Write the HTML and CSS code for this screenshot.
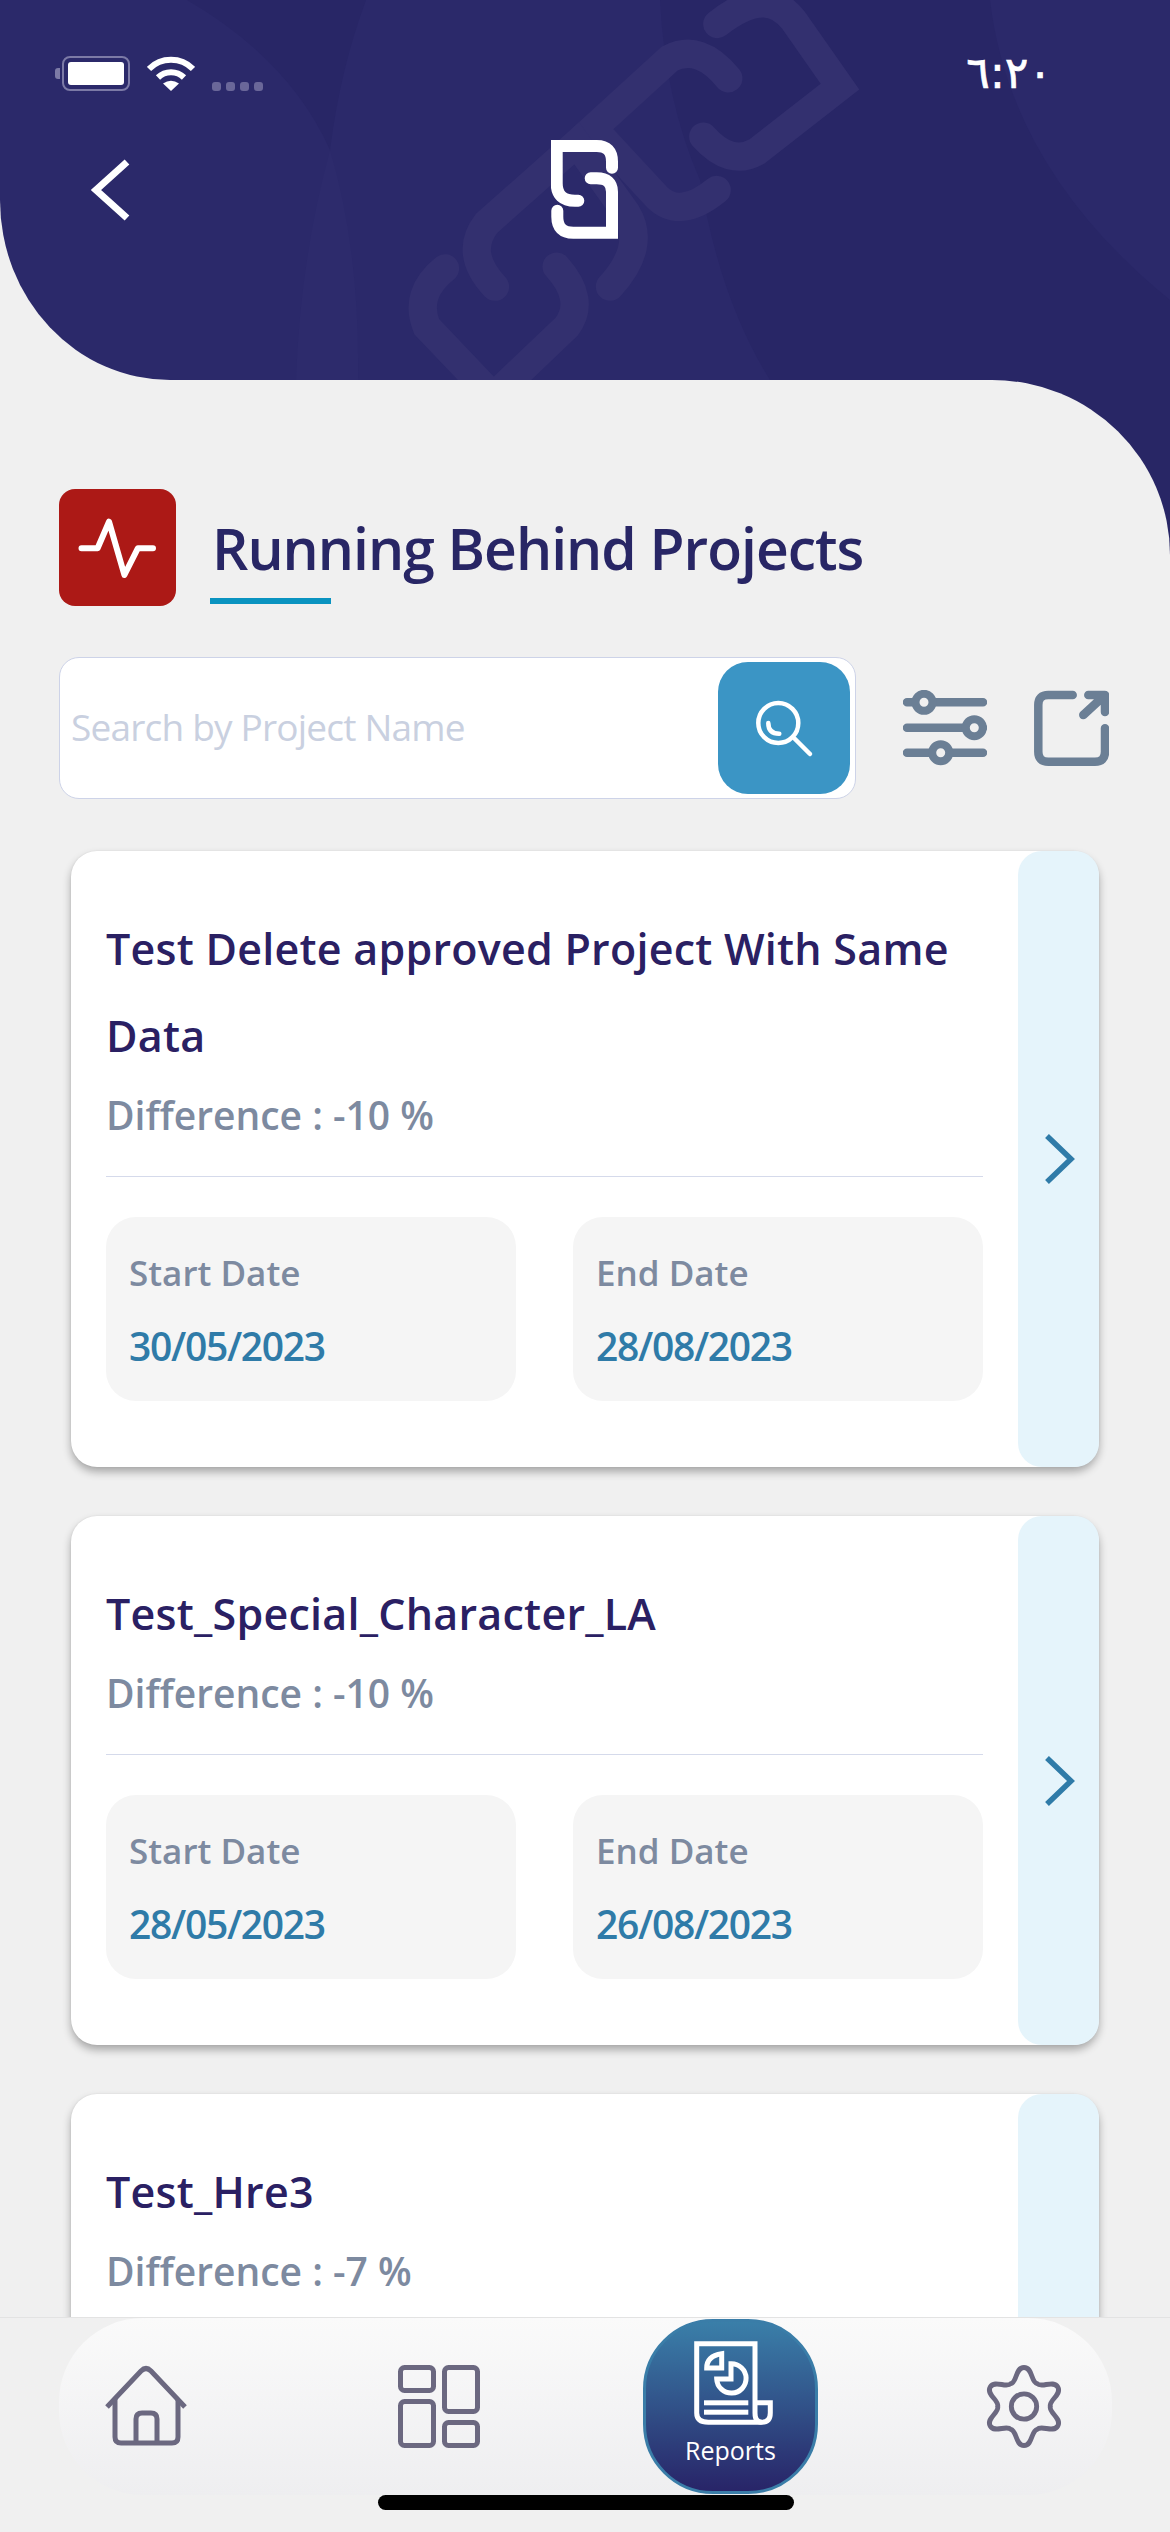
FILE: index.html
```html
<!DOCTYPE html>
<html lang="en">
  <head>
    <meta charset="UTF-8" />
    <meta name="viewport" content="width=device-width, initial-scale=1.0" />
    <title>Running Behind Projects</title>
    <link rel="stylesheet" href="styles.css">
  </head>
  <body>
    <div class="screen">
      <header class="header">
        <div class="header-art">
          <svg class="swoosh" viewBox="0 0 1170 380" width="1170" height="380">
            <path class="swoosh-dark" d="M187 0H366Q340 70 330 150Q290 60 187 0Z"/>
            <path class="swoosh-light" d="M330 150Q300 260 296 380H358Q360 250 330 150Z"/>
            <path class="swoosh-dark" d="M700 180Q720 300 770 380H1170V300Q1010 170 990 0H660Q665 100 700 180Z"/>
            <g class="chain" transform="translate(380 0) scale(.3333)">
              <path d="M1012 72Q1090 10 1150 10Q1200 10 1240 60L1380 260L1130 455Q1050 500 970 410"/>
              <path d="M1045 235Q960 130 870 175L640 385L830 590Q900 660 1010 570"/>
              <path d="M345 860Q250 760 320 670L590 430L740 640Q800 740 690 860"/>
              <path d="M195 805Q100 880 140 980L340 1190L560 980Q620 900 530 800"/>
            </g>
          </svg>
        </div>
        <div class="status">
          <div class="battery"><span class="battery-level"></span></div>
          <svg class="wifi" viewBox="0 0 48 36" width="48" height="36">
            <path d="M2 14A31 31 0 0 1 46 14" />
            <path d="M11 22.500A18.500 18.500 0 0 1 37 22.500" />
            <path class="wifi-dot" d="M24 36L16 28.500Q24 23 32 28.500Z" />
          </svg>
          <div class="signal"><span></span><span></span><span></span><span></span></div>
          <div class="clock">٦:٢٠</div>
        </div>
        <div class="topbar">
          <svg class="back" viewBox="0 0 42 66" width="42" height="66">
            <path d="M37 5L6 33L37 61" />
          </svg>
          <svg class="logo" viewBox="0 0 68 100" width="68" height="100">
            <path class="logo-cap" d="M61 27.700V21.700Q61 6 45.700 6H5.700V43.300Q5.700 60.700 24 60.700H27.300" />
            <path class="logo-cap" d="M39.700 38.300H45.700Q61 38.300 61 51.700V92.700H22.300Q6.300 92.700 6.300 76.700V70.700" />
          </svg>
          <span></span>
        </div>
      </header>

      <main class="content">
        <div class="page-head">
          <div class="page-icon">
            <svg viewBox="0 0 117 117" width="117" height="117">
              <path d="M22.500 59.300H38.600L50 32.700L65.400 86L78.800 59.300H94" />
            </svg>
          </div>
          <div class="page-title">
            <h1>Running Behind Projects</h1>
            <div class="title-line"></div>
          </div>
        </div>

        <div class="toolbar">
          <div class="search">
            <span class="search-text">Search by Project Name</span>
            <button class="search-btn">
              <svg viewBox="0 0 132 132" width="132" height="132">
                <circle cx="60.300" cy="61" r="20" />
                <path d="M77 77L92 92" />
                <path d="M50.300 61Q50.300 71.700 61.300 71.700" />
              </svg>
            </button>
          </div>
          <svg class="tool-sliders" viewBox="0 0 84 76" width="84" height="76">
            <path d="M4 12.300H80M4 37.700H80M4 62.700H80" />
            <circle cx="21" cy="12.300" r="8.500" />
            <circle cx="71.300" cy="37.700" r="8.500" />
            <circle cx="37.700" cy="62.700" r="8.500" />
          </svg>
          <svg class="tool-share" viewBox="0 0 75 76" width="75" height="76">
            <path d="M38.700 5H14.300Q4.300 5 4.300 15V61.700Q4.300 71.700 14.300 71.700H61Q71 71.700 71 61.700V38.300" />
            <path d="M49.300 25L71 5M54.300 5H71V22" />
          </svg>
        </div>

        <div class="cards">
          <section class="card">
            <div class="card-body">
              <h2>Test Delete approved Project With Same Data</h2>
              <p class="diff">Difference : -10 %</p>
              <div class="dates">
                <div class="date-box"><span class="date-label">Start Date</span><span class="date-value">30/05/2023</span></div>
                <div class="date-box"><span class="date-label">End Date</span><span class="date-value">28/08/2023</span></div>
              </div>
            </div>
            <div class="card-go">
              <svg viewBox="0 0 32 50" width="32" height="50"><path d="M3 2L27 25L3 48" /></svg>
            </div>
          </section>

          <section class="card">
            <div class="card-body">
              <h2>Test_Special_Character_LA</h2>
              <p class="diff">Difference : -10 %</p>
              <div class="dates">
                <div class="date-box"><span class="date-label">Start Date</span><span class="date-value">28/05/2023</span></div>
                <div class="date-box"><span class="date-label">End Date</span><span class="date-value">26/08/2023</span></div>
              </div>
            </div>
            <div class="card-go">
              <svg viewBox="0 0 32 50" width="32" height="50"><path d="M3 2L27 25L3 48" /></svg>
            </div>
          </section>

          <section class="card">
            <div class="card-body">
              <h2>Test_Hre3</h2>
              <p class="diff">Difference : -7 %</p>
            </div>
            <div class="card-go"></div>
          </section>
        </div>
      </main>

      <nav class="nav">
        <div class="nav-pill">
          <svg class="nav-home" viewBox="0 0 84 84" width="84" height="84">
            <path d="M3 42L37 6Q42 1 47 6L81 42" />
            <path d="M11 34V72Q11 78 17 78H68Q74 78 74 72V34" />
            <path d="M32 78V54Q32 48 38 48H47Q53 48 53 54V78" />
          </svg>
          <svg class="nav-grid" viewBox="0 0 84 83" width="84" height="83">
            <rect x="3.500" y="2.500" width="33" height="23" rx="4" />
            <rect x="47.500" y="2.500" width="33" height="44" rx="4" />
            <rect x="3.500" y="36.500" width="33" height="44" rx="4" />
            <rect x="47.500" y="57.500" width="33" height="23" rx="4" />
          </svg>
          <div class="nav-reports">
            <svg viewBox="0 0 79 84" width="79" height="84">
              <path d="M61 59V2.700H2.700V72Q2.700 81.300 14.300 81.300H67.700" />
              <path d="M61 61.700H76.300V72Q76.300 81.300 67.700 81.300Q61 81.300 61 72V59" />
              <path d="M27.700 12.700V27H12.700Q12.700 15 27.700 12.700Z" />
              <path d="M37 22.700V38H22.700A14.700 14.700 0 1 0 37 22.700Z" />
              <rect class="fill" x="10" y="59.300" width="44.300" height="5" />
              <rect class="fill" x="10" y="68.700" width="44.300" height="5" />
            </svg>
            <span>Reports</span>
          </div>
          <svg class="nav-gear" viewBox="-40 -42 80 84" width="78" height="83">
            <path d="M-13.500 -23.400C-7 -25 -9 -40 0 -40C9 -40 7 -25 13.500 -23.400C18.150 -18.560 30.140 -27.790 34.640 -20C39.140 -12.210 25.150 -6.440 27 0C25.150 6.440 39.140 12.210 34.640 20C30.140 27.790 18.150 18.560 13.500 23.400C7 25 9 40 0 40C-9 40 -7 25 -13.500 23.400C-18.150 18.560 -30.140 27.790 -34.640 20C-39.140 12.210 -25.150 6.440 -27 0C-25.150 -6.440 -39.140 -12.210 -34.640 -20C-30.140 -27.790 -18.150 -18.560 -13.500 -23.400Z" />
            <circle cx="0" cy="0" r="13" />
          </svg>
        </div>
        <div class="home-bar"></div>
      </nav>
    </div>
  </body>
</html>
```

FILE: styles.css
```css
* {
  box-sizing: border-box;
}
html, body {
  margin: 0;
  padding: 0;
}
body {
  font-family: "Open Sans", "Noto Sans", "Liberation Sans", sans-serif;
}
.screen {
  isolation: isolate;
  display: flex;
  flex-direction: column;
  width: 1170px;
  height: 2532px;
  overflow: hidden;
  background: #f0f0f0;
}

/* header */
.header {
  position: relative;
  flex: none;
  height: 380px;
  padding-top: 55px;
  color: #fff;
}
/* navy corner behind the rounded top right of the content */
.header::after {
  content: "";
  position: absolute;
  z-index: -1;
  top: 100%;
  right: 0;
  width: 178px;
  height: 175px;
  background: #282665;
}
.header-art {
  position: absolute;
  z-index: -1;
  inset: 0;
  overflow: hidden;
  background: #2b296a;
  border-bottom-left-radius: 170px 180px;
}
.swoosh {
  display: block;
}
.swoosh-dark {
  fill: #282666;
}
.swoosh-light {
  fill: #2d2b6c;
}
.chain path {
  fill: none;
  stroke: #33306f;
  stroke-width: 85;
  stroke-linecap: round;
}
.status {
  display: flex;
  align-items: flex-start;
  height: 36px;
  padding-left: 62px;
}
.battery {
  position: relative;
  width: 68px;
  height: 35px;
  margin-top: 1px;
  padding: 4px;
  border: 2px solid #7c7aa6;
  border-radius: 8px;
}
.battery::before {
  content: "";
  position: absolute;
  left: -9px;
  top: 10px;
  width: 5px;
  height: 11px;
  border-radius: 3px 0 0 3px;
  background: #7c7aa6;
}
.battery-level {
  display: block;
  height: 100%;
  border-radius: 3px;
  background: #fff;
}
.wifi {
  margin-left: 17px;
}
.wifi path {
  fill: none;
  stroke: #fff;
  stroke-width: 6;
}
.wifi .wifi-dot {
  fill: #fff;
  stroke: none;
}
.signal {
  display: flex;
  gap: 5px;
  margin-left: 17px;
  margin-top: 27px;
}
.signal span {
  width: 9px;
  height: 9px;
  border-radius: 3px;
  background: #6a6799;
}
.clock {
  margin-left: auto;
  margin-right: 118px;
  font-family: "DejaVu Sans", sans-serif;
  font-size: 44px;
  line-height: 36px;
  direction: ltr;
  -webkit-text-stroke: 0.7px #fff;
}
.topbar {
  display: grid;
  grid-template-columns: 1fr auto 1fr;
  align-items: center;
  margin-top: 49px;
}
.back {
  margin-left: 90px;
}
.back path {
  fill: none;
  stroke: #fff;
  stroke-width: 7;
}
.logo {
  display: block;
}
.logo-cap {
  fill: none;
  stroke: #fff;
  stroke-width: 12;
  stroke-linecap: round;
  stroke-linejoin: miter;
}

/* content */
.content {
  flex: 1;
  min-height: 0;
  overflow: hidden;
  padding-top: 109px;
  background: #f0f0f0;
  border-top-right-radius: 178px 175px;
}
.page-head {
  display: flex;
  padding-left: 59px;
}
.page-icon {
  width: 117px;
  height: 117px;
  border-radius: 16px;
  background: #ac1916;
}
.page-icon svg {
  display: block;
}
.page-icon path {
  fill: none;
  stroke: #fff;
  stroke-width: 6;
  stroke-linecap: round;
  stroke-linejoin: round;
}
.page-title {
  margin-left: 34px;
  padding-top: 24px;
}
h1 {
  margin: 0;
  padding-left: 2px;
  font-size: 57px;
  font-weight: 600;
  letter-spacing: -1px;
  line-height: 70px;
  color: #282665;
  white-space: nowrap;
}
.title-line {
  width: 121px;
  height: 6px;
  margin-top: 15px;
  background: #0a93c0;
}
.toolbar {
  display: flex;
  align-items: flex-start;
  margin-top: 51px;
  padding-left: 59px;
}
.search {
  display: flex;
  align-items: center;
  justify-content: space-between;
  width: 797px;
  height: 142px;
  padding: 0 5px 0 11px;
  background: #fff;
  border: 1.5px solid #cdd3e8;
  border-radius: 20px;
}
.search-text {
  margin-top: -4px;
  font-size: 37px;
  letter-spacing: -0.8px;
  color: #c9d0e0;
}
.search-btn {
  width: 132px;
  height: 132px;
  padding: 0;
  border: 0;
  border-radius: 30px;
  background: #3b95c5;
}
.search-btn svg {
  display: block;
}
.search-btn circle, .search-btn path {
  fill: none;
  stroke: #fff;
  stroke-width: 4.500;
  stroke-linecap: round;
}
.tool-sliders {
  margin-top: 33px;
  margin-left: 47px;
}
.tool-sliders path {
  stroke: #6b7f95;
  stroke-width: 8.500;
  stroke-linecap: round;
}
.tool-sliders circle {
  fill: #f0f0f0;
  stroke: #6b7f95;
  stroke-width: 8;
}
.tool-share {
  margin-top: 33px;
  margin-left: 47px;
}
.tool-share path {
  fill: none;
  stroke: #6b7f95;
  stroke-width: 8.500;
  stroke-linecap: round;
  stroke-linejoin: round;
}

/* cards */
.cards {
  display: flex;
  flex-direction: column;
  gap: 49px;
  margin-top: 52px;
  padding: 0 71px;
}
.card {
  display: flex;
  justify-content: space-between;
  flex: none;
  background: #fff;
  border-radius: 26px;
  box-shadow: 0 5px 9px rgba(0, 0, 0, 0.3), 0 0 2px rgba(0, 0, 0, 0.08);
}
.card-body {
  width: 877px;
  margin-left: 35px;
  padding: 54px 0 66px;
}
h2 {
  margin: 0;
  font-size: 43px;
  font-weight: 600;
  letter-spacing: 0.25px;
  line-height: 87px;
  color: #2a2063;
}
.diff {
  margin: 8px 0 0;
  padding-bottom: 33px;
  font-size: 39px;
  font-weight: 600;
  line-height: 56px;
  color: #7d8aa0;
  border-bottom: 1.500px solid #d5daeb;
}
.dates {
  display: flex;
  gap: 57px;
  margin-top: 40px;
}
.date-box {
  display: flex;
  flex-direction: column;
  gap: 17px;
  width: 410px;
  height: 184px;
  padding: 28px 23px;
  border-radius: 30px;
  background: #f5f5f5;
}
.date-label {
  font-size: 35px;
  line-height: 56px;
  font-weight: 600;
  color: #7d8aa0;
}
.date-value {
  font-size: 39px;
  letter-spacing: -1.300px;
  line-height: 56px;
  font-weight: 600;
  color: #2f7ba8;
}
.card-go {
  display: flex;
  align-items: center;
  justify-content: flex-start;
  width: 81px;
  padding-left: 26px;
  border-radius: 24px;
  background: #e5f4fb;
}
.card-go path {
  fill: none;
  stroke: #2f7ba8;
  stroke-width: 5.500;
}

/* bottom nav */
.nav {
  flex: none;
  height: 215px;
  background: #f0f0f0;
  border-top: 1.500px solid #e3e3e3;
}
.nav-pill {
  display: flex;
  align-items: center;
  width: 1053px;
  height: 177px;
  margin-left: 59px;
  border-radius: 84px;
  background: linear-gradient(#fafafa, #eeeef0);
}
.nav-pill svg {
  flex: none;
}
.nav-home, .nav-grid, .nav-gear {
  fill: none;
  stroke: #6b6880;
  stroke-width: 5;
}
.nav-home {
  margin-left: 45px;
}
.nav-grid {
  margin-left: 209px;
}
.nav-gear {
  margin-left: 167px;
}
.nav-reports {
  display: flex;
  flex-direction: column;
  align-items: center;
  width: 175px;
  height: 175px;
  margin-left: 162px;
  padding-top: 19px;
  color: #fff;
  border: 3px solid #3a7da8;
  border-radius: 70px;
  background: linear-gradient(#3a7fa9, #282468);
}
.nav-reports svg {
  display: block;
  margin-left: 6px;
  fill: none;
  stroke: #fff;
  stroke-width: 5;
}
.nav-reports .fill {
  fill: #fff;
  stroke: none;
}
.nav-reports span {
  margin-top: 5px;
  font-size: 25px;
  line-height: 40px;
}
.home-bar {
  width: 416px;
  height: 15px;
  margin: 0 0 0 378px;
  border-radius: 8px;
  background: #000;
}
```
